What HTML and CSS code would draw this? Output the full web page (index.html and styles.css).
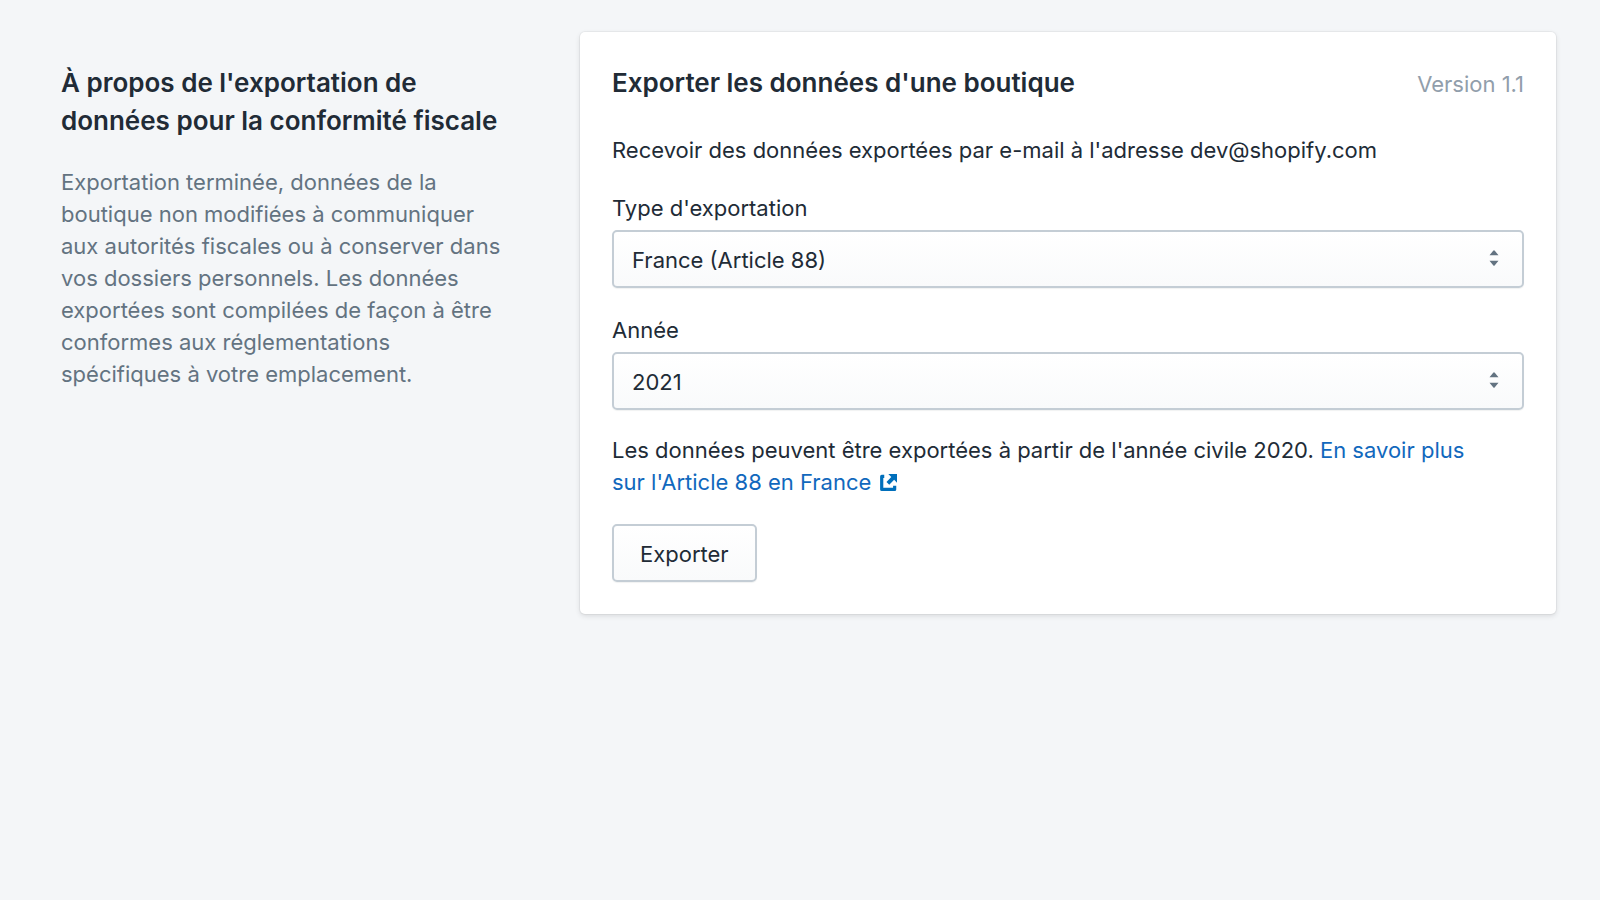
FILE: index.html
```html
<!DOCTYPE html>
<html lang="fr">
<head>
<meta charset="utf-8">
<meta name="viewport" content="width=device-width, initial-scale=1">
<title>Exportation de données</title>
<link rel="stylesheet" href="styles.css">
</head>
<body>
<main class="layout">
  <section class="annotation">
    <h2 class="heading">À propos de l'exportation de données pour la conformité fiscale</h2>
    <p class="description">Exportation terminée, données de la boutique non modifiées à communiquer aux autorités fiscales ou à conserver dans vos dossiers personnels. Les données exportées sont compilées de façon à être conformes aux réglementations spécifiques à votre emplacement.</p>
  </section>
  <form class="card">
    <header class="card-header">
      <h2 class="heading">Exporter les données d'une boutique</h2>
      <span class="version">Version 1.1</span>
    </header>
    <div class="card-body">
      <p>Recevoir des données exportées par e-mail à l'adresse dev@shopify.com</p>
      <div class="field">
        <label for="export-type">Type d'exportation</label>
        <div class="select-wrap">
          <select id="export-type" class="select"><option>France (Article 88)</option></select>
          <svg class="select-icon" viewBox="0 0 10 16" aria-hidden="true"><path d="M0.500 5.200 4.200.7a1 1 0 0 1 1.600 0L9.500 5.200zM0.500 10.800h9L5.800 15.300a1 1 0 0 1-1.600 0z"/></svg>
        </div>
      </div>
      <div class="field">
        <label for="export-year">Année</label>
        <div class="select-wrap">
          <select id="export-year" class="select"><option>2021</option></select>
          <svg class="select-icon" viewBox="0 0 10 16" aria-hidden="true"><path d="M0.500 5.200 4.200.7a1 1 0 0 1 1.600 0L9.500 5.200zM0.500 10.800h9L5.800 15.300a1 1 0 0 1-1.600 0z"/></svg>
        </div>
      </div>
      <p class="help">Les données peuvent être exportées à partir de l'année civile 2020. <a class="link" href="#">En savoir plus sur&nbsp;l'Article 88 en France&nbsp;<svg class="external" viewBox="0 0 16 16" aria-hidden="true"><path d="M4 2.300H1.600v12.200h12.200V11" fill="none" stroke="currentColor" stroke-width="3" stroke-linejoin="round"/><path d="M7.800 0H16v8.200l-2.700-2.700-4.600 4.600-2.600-2.600 4.500-4.600z" fill="currentColor"/></svg></a></p>
      <button class="button" type="button">Exporter</button>
    </div>
  </form>
</main>
</body>
</html>
```
FILE: styles.css
```css
*,
*::before,
*::after {
  box-sizing: border-box;
}

body {
  margin: 0;
  background: #f4f6f8;
  color: #212b36;
  font-family: Inter, "Liberation Sans", sans-serif;
  font-size: 22px;
  line-height: 32px;
}

h2,
p {
  margin: 0;
}

.layout {
  display: grid;
  grid-template-columns: 455fr 976fr;
  gap: 64px;
  align-items: start;
  padding: 32px 44px 32px 61px;
}

.annotation {
  display: flex;
  flex-direction: column;
  gap: 26px;
  padding-top: 32px;
}

.heading {
  font-size: 26px;
  font-weight: 600;
  line-height: 38px;
}

.description {
  color: #637381;
}

.card {
  display: flex;
  flex-direction: column;
  gap: 32px;
  padding: 32px;
  background: #fff;
  border-radius: 5px;
  box-shadow: 0 0 0 1px rgba(63, 63, 68, 0.05), 0 2px 5px rgba(63, 63, 68, 0.15);
}

.card-header {
  display: flex;
  align-items: baseline;
  justify-content: space-between;
  gap: 24px;
}

.version {
  color: #919eab;
  white-space: nowrap;
}

.card-body {
  display: flex;
  flex-direction: column;
}

.field {
  display: flex;
  flex-direction: column;
  gap: 6px;
  margin-top: 26px;
}

.help {
  margin-top: 24px;
}

.select-wrap {
  position: relative;
}

.select,
.button {
  height: 58px;
  border: 2px solid #c4cdd5;
  border-radius: 5px;
  background: linear-gradient(#fff, #f9fafb);
  box-shadow: 0 1px 1px rgba(22, 29, 37, 0.06);
  color: inherit;
  font: inherit;
}

.select {
  display: block;
  width: 100%;
  padding: 1px 48px 0 18px;
  appearance: none;
}

.select-icon {
  position: absolute;
  top: 20px;
  right: 25px;
  width: 10px;
  height: 16px;
  fill: #637381;
  pointer-events: none;
}

.link {
  color: #1168bd;
  text-decoration: none;
}

.external {
  width: 17px;
  height: 17px;
  margin-left: 2px;
  vertical-align: -1px;
  color: #006fbb;
}

.button {
  align-self: flex-start;
  margin-top: 26px;
  padding: 1px 26px 0;
}
```
